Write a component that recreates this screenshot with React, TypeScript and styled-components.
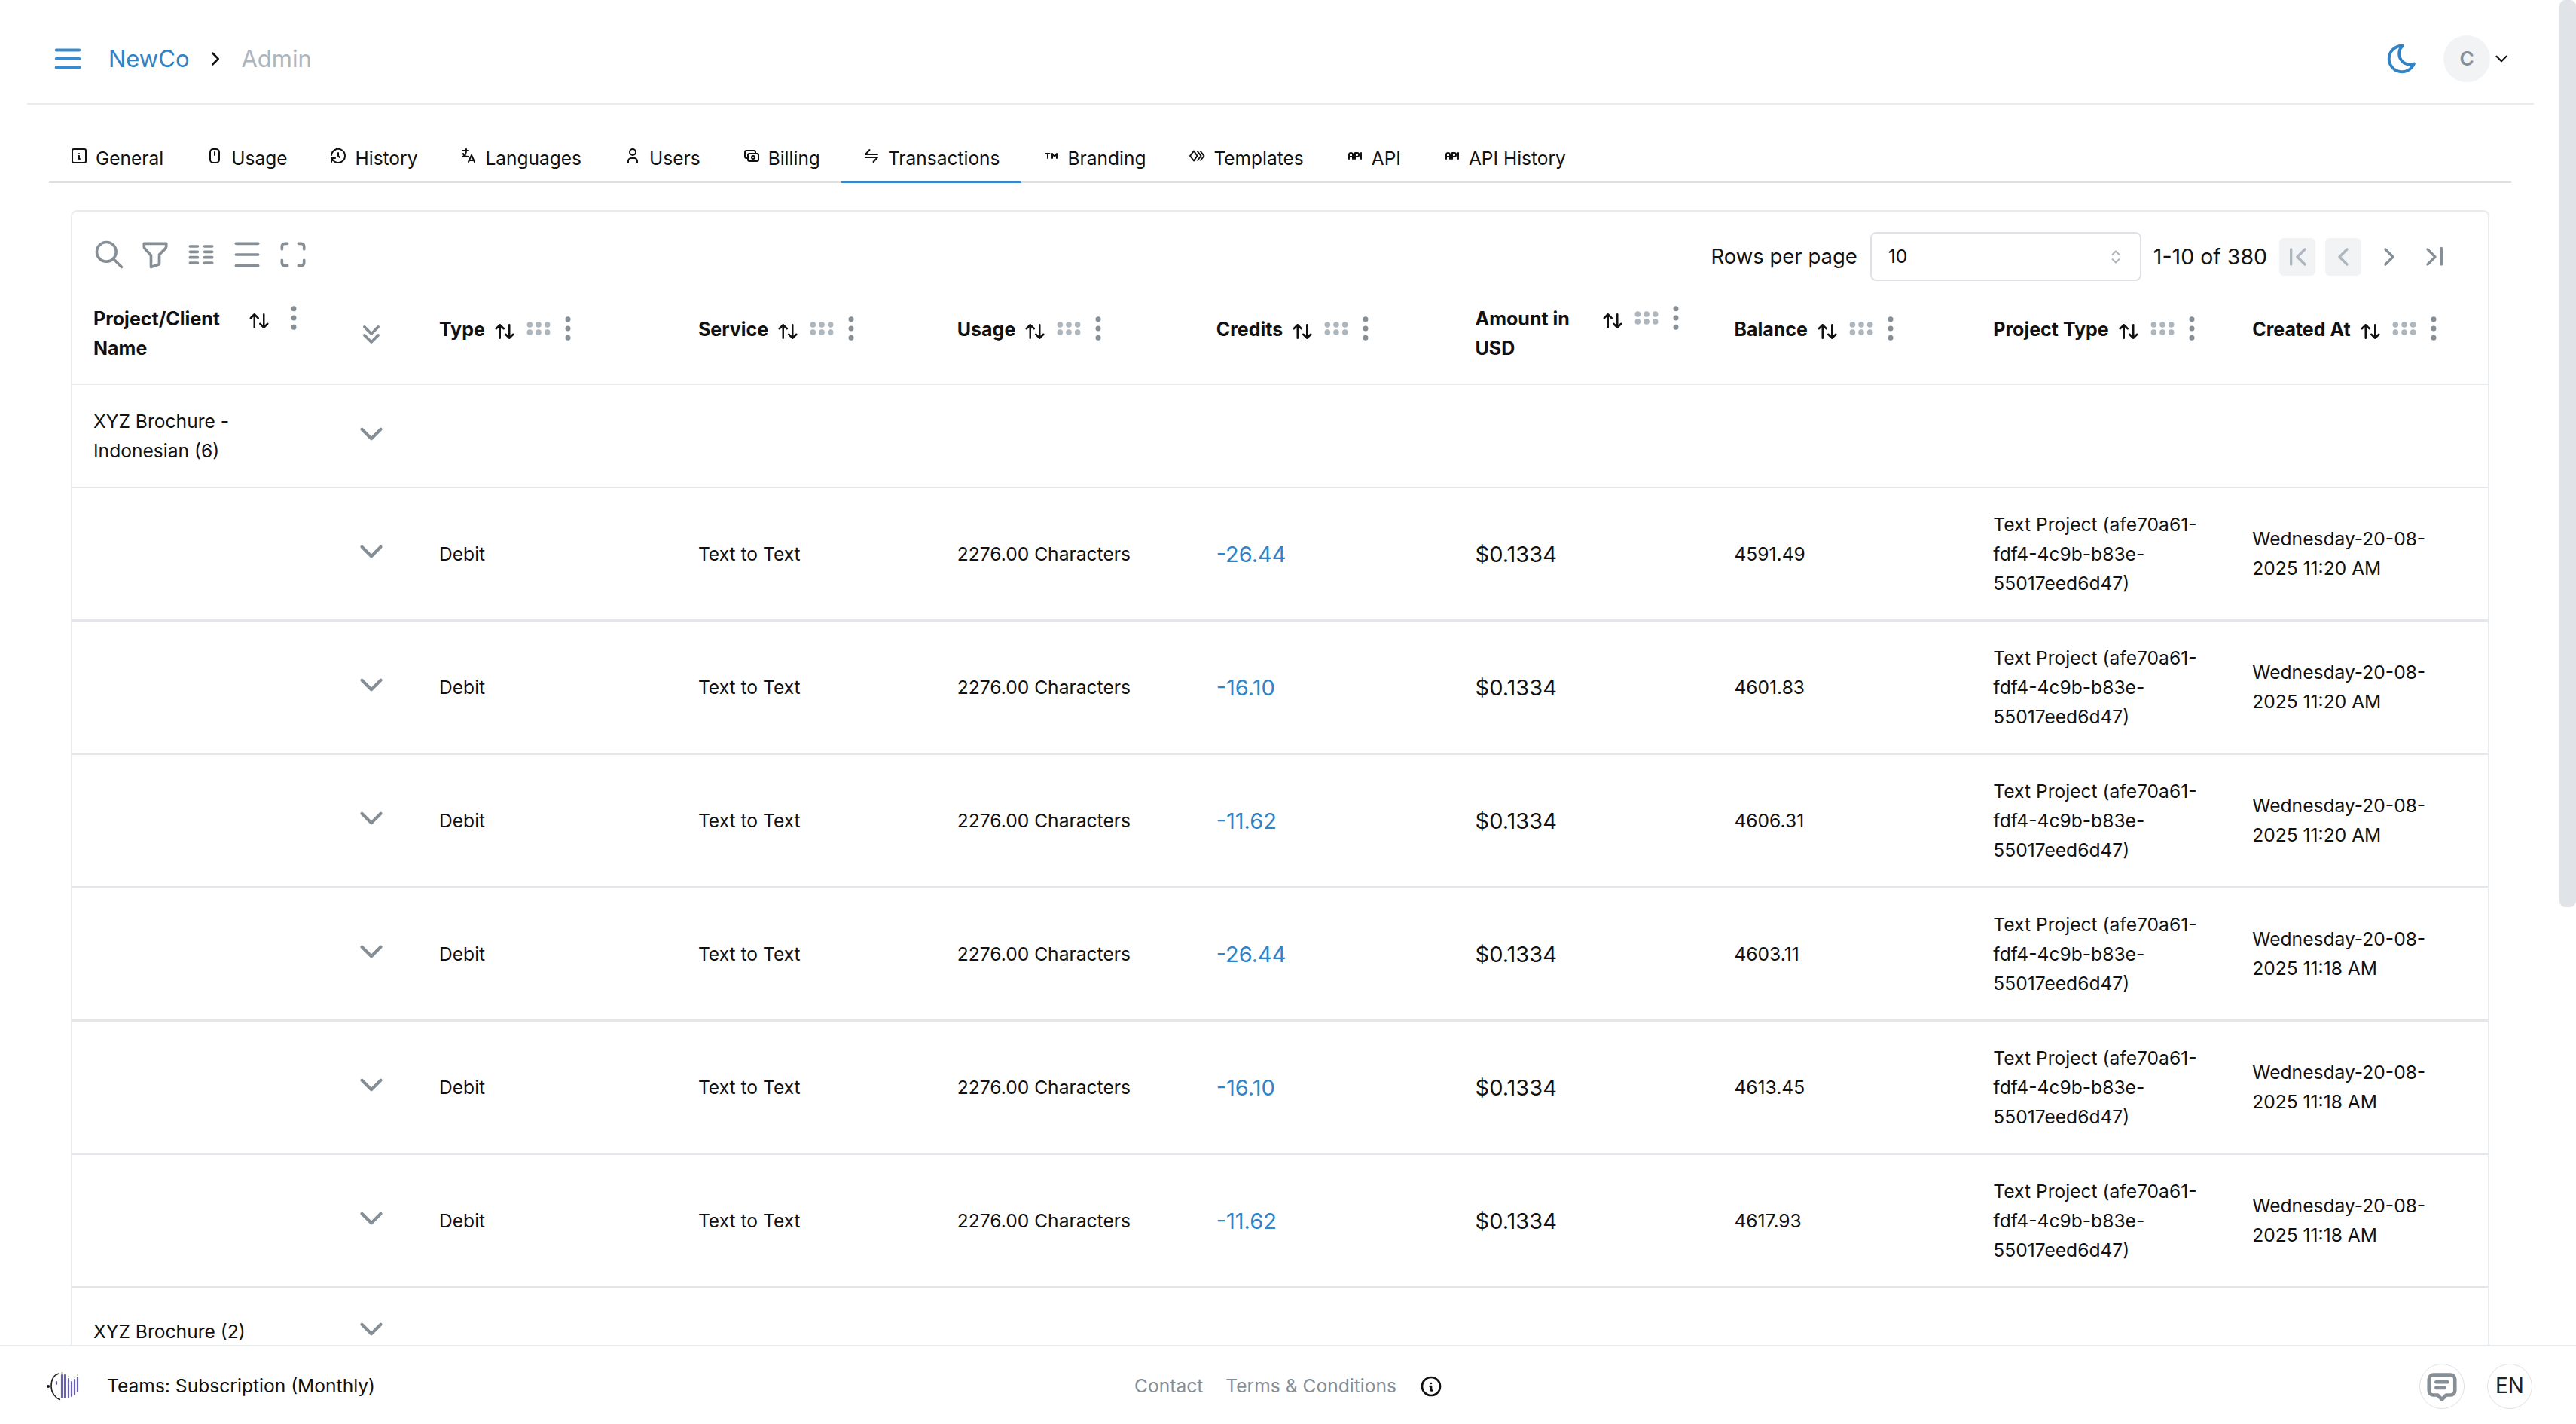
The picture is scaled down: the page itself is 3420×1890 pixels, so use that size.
import React from "react";
import styled, { createGlobalStyle } from "styled-components";
import {
  TbApi,
  TbArrowsSort,
  TbBaselineDensityMedium,
  TbCash,
  TbChevronDown,
  TbChevronLeft,
  TbChevronLeftPipe,
  TbChevronRight,
  TbChevronRightPipe,
  TbChevronsDown,
  TbColumns,
  TbDotsVertical,
  TbFilter,
  TbGripHorizontal,
  TbHistory,
  TbInfoCircle,
  TbInfoSquare,
  TbLanguage,
  TbMaximize,
  TbMenu2,
  TbMessage2,
  TbMoon,
  TbMouse,
  TbSearch,
  TbSelector,
  TbTrademark,
  TbTransfer,
  TbUser,
} from "react-icons/tb";

const COLUMNS = "344px 115px repeat(7, 343.9px) 1fr";

const GlobalStyle = createGlobalStyle`
  html, body {
    margin: 0;
    padding: 0;
    background: #fff;
  }
  body {
    font-family: "Inter", "Liberation Sans", sans-serif;
    color: #111;
    font-size: 24.6px;
    line-height: 39px;
  }
`;

const Page = styled.div`
  position: relative;
  width: 3420px;
  height: 100vh;
  overflow: hidden;
  display: flex;
  flex-direction: column;
`;

const ScrollThumb = styled.div`
  position: absolute;
  top: 0;
  right: 0;
  width: 22px;
  height: 1204px;
  background: #e0e4e8;
  border-radius: 8px;
`;

const Header = styled.header`
  flex: none;
  margin: 0 56px 0 36px;
  height: 137px;
  box-sizing: content-box;
  border-bottom: 2px solid #e9ecef;
  display: flex;
  align-items: center;
  justify-content: space-between;
  padding: 0 30px 0 31px;
`;

const Crumbs = styled.div`
  display: flex;
  align-items: center;
  font-size: 31px;
  line-height: 44px;
  margin-top: 18px;
`;

const MenuButton = styled.span`
  display: flex;
  color: #3a8bcd;
  margin-right: 31px;
`;

const CrumbLink = styled.span`
  color: #2f83c6;
`;

const CrumbSep = styled.span`
  display: flex;
  margin: 0 19px 0 20px;
  color: #111;
`;

const CrumbMuted = styled.span`
  color: #adb5bd;
`;

const HeaderRight = styled.div`
  display: flex;
  align-items: center;
  margin-top: 18px;
`;

const MoonButton = styled.span`
  display: flex;
  color: #2f83c6;
  margin-right: 32px;
`;

const Avatar = styled.span`
  width: 62px;
  height: 62px;
  border-radius: 50%;
  background: #f1f3f5;
  color: #868e96;
  font-size: 26px;
  font-weight: 600;
  display: flex;
  align-items: center;
  justify-content: center;
`;

const Caret = styled.span`
  display: flex;
  margin-left: 2px;
  color: #111;
`;

const TabBar = styled.nav`
  flex: none;
  margin: 41px 0 0 65px;
  width: 3269px;
  height: 60px;
  display: flex;
  border-bottom: 3px solid #e0e0e0;
`;

const Tab = styled.div<{ $active?: boolean }>`
  height: 60px;
  padding: 0 28px;
  display: flex;
  align-items: center;
  gap: 10px;
  font-size: 24.5px;
  color: #111;
  border-bottom: 3px solid ${(p) => (p.$active ? "#3a86c8" : "transparent")};
  svg {
    margin-top: -6px;
  }
`;

const Card = styled.section`
  flex: none;
  margin: 36px 0 0 94px;
  width: 3207px;
  border: 2px solid #e9ecef;
  border-radius: 8px 8px 0 0;
  border-bottom: none;
`;

const Toolbar = styled.div`
  height: 95px;
  padding: 27px 46px 3px 18px;
  box-sizing: border-box;
  display: flex;
  justify-content: space-between;
  align-items: flex-start;
`;

const ToolIcons = styled.div`
  display: flex;
  margin-top: 8px;
  height: 44px;
`;

const ToolIcon = styled.span`
  width: 61px;
  display: flex;
  justify-content: center;
  color: #868e96;
`;

const Pager = styled.div`
  display: flex;
  align-items: center;
  height: 65px;
  font-size: 27.5px;
`;

const PageInfo = styled.span`
  font-size: 28.5px;
`;

const Select = styled.div`
  width: 360px;
  height: 65px;
  box-sizing: border-box;
  margin: 0 16px 0 17px;
  padding: 0 19px 0 22px;
  border: 2px solid #dee2e6;
  border-radius: 8px;
  display: flex;
  align-items: center;
  justify-content: space-between;
  font-size: 24.6px;
  color: #adb5bd;
  span {
    color: #111;
  }
`;

const PageButtons = styled.div`
  display: flex;
  gap: 13px;
  margin-left: 16px;
`;

const PageButton = styled.span<{ $off?: boolean }>`
  width: 48px;
  height: 50px;
  border-radius: 6px;
  display: flex;
  align-items: center;
  justify-content: center;
  background: ${(p) => (p.$off ? "#f1f3f5" : "transparent")};
  color: ${(p) => (p.$off ? "#adb5bd" : "#868e96")};
`;

const HeadRow = styled.div`
  display: grid;
  grid-template-columns: ${COLUMNS};
  height: 135px;
  box-sizing: border-box;
  border-bottom: 2px solid #e9ecef;
`;

const HeadCell = styled.div`
  display: flex;
  align-items: flex-start;
  align-self: center;
  min-height: 50px;
  padding-left: 28px;
  font-size: 25px;
  font-weight: 700;
`;

const HeadTitle = styled.span<{ $width?: number }>`
  flex: none;
  ${(p) => (p.$width ? `width: ${p.$width}px;` : "")}
`;

const SortIcon = styled.span`
  display: flex;
  margin: 7px 0 0 11px;
  color: #111;
`;

const GripIcon = styled.span`
  display: flex;
  margin: -2px 0 0 10px;
  color: #adb5bd;
`;

const DotsIcon = styled.span<{ $left?: number }>`
  display: flex;
  margin: -3px 0 0 ${(p) => p.$left ?? -2}px;
  color: #868e96;
`;

const ExpandAll = styled.div`
  align-self: center;
  display: flex;
  justify-content: center;
  color: #868e96;
  margin-right: 10px;
`;

const Row = styled.div<{ $height: number; $line: number }>`
  display: grid;
  grid-template-columns: ${COLUMNS};
  align-items: center;
  box-sizing: border-box;
  height: ${(p) => p.$height}px;
  border-bottom: ${(p) => p.$line}px solid #e4e6e9;
`;

const Cell = styled.div`
  padding: 0 30px 0 28px;
  min-width: 0;
  white-space: pre-line;
`;

const Chevron = styled.div`
  display: flex;
  justify-content: center;
  color: #868e96;
  margin: 0 10px 6px 0;
`;

const Credit = styled(Cell)`
  color: #2f83c6;
  font-size: 29px;
`;

const Amount = styled(Cell)`
  font-size: 29px;
`;

const Footer = styled.footer`
  position: absolute;
  left: 0;
  right: 0;
  bottom: 0;
  height: 105px;
  box-sizing: border-box;
  background: #fff;
  border-top: 2px solid #e9ecef;
  display: grid;
  grid-template-columns: 1fr auto 1fr;
  align-items: center;
  padding: 2px 58px 0 60px;
`;

const FooterLeft = styled.div`
  display: flex;
  align-items: center;
  gap: 36px;
`;

const FooterLinks = styled.div`
  display: flex;
  align-items: center;
  gap: 30px;
  color: #868e96;
  svg {
    color: #111;
  }
`;

const FooterRight = styled.div`
  display: flex;
  justify-content: flex-end;
  gap: 30px;
`;

const RoundButton = styled.span`
  width: 60px;
  height: 60px;
  border-radius: 50%;
  border: 1px solid #dee2e6;
  box-sizing: border-box;
  display: flex;
  align-items: center;
  justify-content: center;
  color: #868e96;
  font-size: 28px;
`;

const EnLabel = styled.span`
  color: #222;
`;

const TemplatesIcon = () => (
  <svg width="24" height="24" viewBox="0 0 24 24" fill="none" stroke="currentColor" strokeWidth="2" strokeLinejoin="round">
    <path d="M8 5.500L3 12l5 6.500 4.500-6.500z" />
    <path d="M12.500 5.500l5 6.500-5 6.500" />
    <path d="M16.500 5.500l5 6.500-5 6.500" />
  </svg>
);

const LogoMark = () => (
  <svg width="46" height="40" viewBox="0 0 46 40" fill="none">
    <path d="M18 3C11 5 8 12 8 20c0 8 5 15 12 18" stroke="#222" strokeWidth="1.600" />
    <circle cx="4" cy="20" r="2" fill="#111" />
    <g stroke="#6a5fb0" strokeWidth="2.200" strokeLinecap="round">
      <path d="M15 14v3" />
      <path d="M22 5v30" />
      <path d="M26 5v30" />
      <path d="M31 10v25" />
      <path d="M35 14v19" />
      <path d="M39 11v20" />
      <path d="M43 8v19" />
    </g>
    <g fill="#a9cf8e">
      <circle cx="22" cy="2" r="1" />
      <circle cx="31" cy="7" r="1" />
      <circle cx="39" cy="8" r="1" />
      <circle cx="43" cy="5" r="1" />
    </g>
  </svg>
);

const tabs: { label: string; icon: React.ReactNode; active?: boolean }[] = [
  { label: "General", icon: <TbInfoSquare size={24} /> },
  { label: "Usage", icon: <TbMouse size={24} /> },
  { label: "History", icon: <TbHistory size={24} /> },
  { label: "Languages", icon: <TbLanguage size={24} /> },
  { label: "Users", icon: <TbUser size={24} /> },
  { label: "Billing", icon: <TbCash size={24} /> },
  { label: "Transactions", icon: <TbTransfer size={24} />, active: true },
  { label: "Branding", icon: <TbTrademark size={24} /> },
  { label: "Templates", icon: <TemplatesIcon /> },
  { label: "API", icon: <TbApi size={24} /> },
  { label: "API History", icon: <TbApi size={24} /> },
];

const headers: { label: string; width?: number }[] = [
  { label: "Type" },
  { label: "Service" },
  { label: "Usage" },
  { label: "Credits" },
  { label: "Amount in USD", width: 156 },
  { label: "Balance" },
  { label: "Project Type" },
  { label: "Created At" },
];

const rows = [
  { credits: "-26.44", balance: "4591.49", time: "11:20 AM" },
  { credits: "-16.10", balance: "4601.83", time: "11:20 AM" },
  { credits: "-11.62", balance: "4606.31", time: "11:20 AM" },
  { credits: "-26.44", balance: "4603.11", time: "11:18 AM" },
  { credits: "-16.10", balance: "4613.45", time: "11:18 AM" },
  { credits: "-11.62", balance: "4617.93", time: "11:18 AM" },
];

const HeadActions = () => (
  <>
    <SortIcon>
      <TbArrowsSort size={30} />
    </SortIcon>
    <GripIcon>
      <TbGripHorizontal size={40} strokeWidth={2.6} />
    </GripIcon>
    <DotsIcon>
      <TbDotsVertical size={42} />
    </DotsIcon>
  </>
);

export default function App() {
  return (
    <Page>
      <GlobalStyle />
      <Header>
        <Crumbs>
          <MenuButton>
            <TbMenu2 size={46} />
          </MenuButton>
          <CrumbLink>NewCo</CrumbLink>
          <CrumbSep>
            <TbChevronRight size={30} />
          </CrumbSep>
          <CrumbMuted>Admin</CrumbMuted>
        </Crumbs>
        <HeaderRight>
          <MoonButton>
            <TbMoon size={46} />
          </MoonButton>
          <Avatar>C</Avatar>
          <Caret>
            <TbChevronDown size={26} />
          </Caret>
        </HeaderRight>
      </Header>

      <TabBar>
        {tabs.map((tab) => (
          <Tab key={tab.label} $active={tab.active}>
            {tab.icon}
            {tab.label}
          </Tab>
        ))}
      </TabBar>

      <Card>
        <Toolbar>
          <ToolIcons>
            <ToolIcon>
              <TbSearch size={44} />
            </ToolIcon>
            <ToolIcon>
              <TbFilter size={44} />
            </ToolIcon>
            <ToolIcon>
              <TbColumns size={44} />
            </ToolIcon>
            <ToolIcon>
              <TbBaselineDensityMedium size={44} />
            </ToolIcon>
            <ToolIcon>
              <TbMaximize size={44} />
            </ToolIcon>
          </ToolIcons>
          <Pager>
            Rows per page
            <Select>
              <span>10</span>
              <TbSelector size={26} />
            </Select>
            <PageInfo>1-10 of 380</PageInfo>
            <PageButtons>
              <PageButton $off>
                <TbChevronLeftPipe size={40} />
              </PageButton>
              <PageButton $off>
                <TbChevronLeft size={40} />
              </PageButton>
              <PageButton>
                <TbChevronRight size={40} />
              </PageButton>
              <PageButton>
                <TbChevronRightPipe size={40} />
              </PageButton>
            </PageButtons>
          </Pager>
        </Toolbar>

        <HeadRow>
          <HeadCell>
            <HeadTitle $width={194}>Project/Client Name</HeadTitle>
            <SortIcon>
              <TbArrowsSort size={30} />
            </SortIcon>
            <DotsIcon $left={10}>
              <TbDotsVertical size={42} />
            </DotsIcon>
          </HeadCell>
          <ExpandAll>
            <TbChevronsDown size={44} />
          </ExpandAll>
          {headers.map((h) => (
            <HeadCell key={h.label}>
              <HeadTitle $width={h.width}>{h.label}</HeadTitle>
              <HeadActions />
            </HeadCell>
          ))}
        </HeadRow>

        <Row $height={137} $line={2}>
          <Cell>{"XYZ Brochure -\nIndonesian (6)"}</Cell>
          <Chevron>
            <TbChevronDown size={50} />
          </Chevron>
        </Row>

        {rows.map((row, i) => (
          <Row key={i} $height={177} $line={3}>
            <Cell />
            <Chevron>
              <TbChevronDown size={50} />
            </Chevron>
            <Cell>Debit</Cell>
            <Cell>Text to Text</Cell>
            <Cell>2276.00 Characters</Cell>
            <Credit>{row.credits}</Credit>
            <Amount>$0.1334</Amount>
            <Cell>{row.balance}</Cell>
            <Cell>{"Text Project (afe70a61-\nfdf4-4c9b-b83e-\n55017eed6d47)"}</Cell>
            <Cell>{`Wednesday-20-08-\n2025 ${row.time}`}</Cell>
          </Row>
        ))}

        <Row $height={116} $line={2}>
          <Cell>XYZ Brochure (2)</Cell>
          <Chevron>
            <TbChevronDown size={50} />
          </Chevron>
        </Row>
      </Card>

      <ScrollThumb />

      <Footer>
        <FooterLeft>
          <LogoMark />
          Teams: Subscription (Monthly)
        </FooterLeft>
        <FooterLinks>
          <span>Contact</span>
          <span>Terms &amp; Conditions</span>
          <TbInfoCircle size={32} />
        </FooterLinks>
        <FooterRight>
          <RoundButton>
            <TbMessage2 size={46} strokeWidth={2.4} />
          </RoundButton>
          <RoundButton>
            <EnLabel>EN</EnLabel>
          </RoundButton>
        </FooterRight>
      </Footer>
    </Page>
  );
}
